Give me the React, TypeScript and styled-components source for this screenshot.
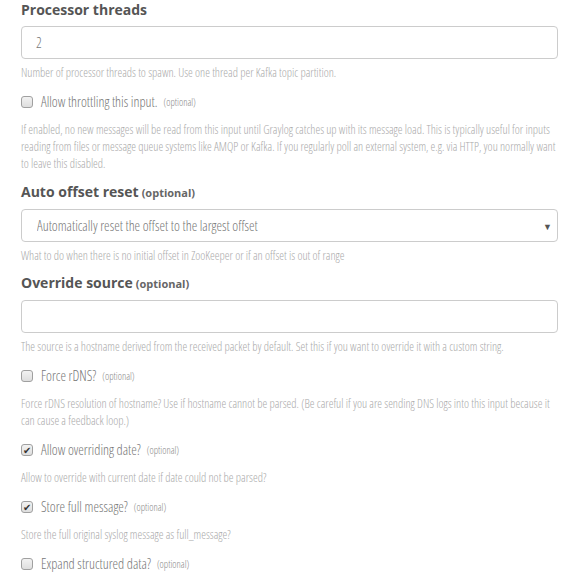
import React from 'react';
import styled, { createGlobalStyle } from 'styled-components';

const GlobalStyle = createGlobalStyle`
  html, body {
    margin: 0;
    padding: 0;
    background: #fff;
  }
  body {
    font-family: "Open Sans", "Liberation Sans", sans-serif;
    font-stretch: 75%;
    font-weight: 300;
    color: #777;
  }
`;

const Form = styled.form`
  padding: 0 20px 0 21px;
`;

const Group = styled.div<{ $tight?: boolean }>`
  margin-bottom: ${({ $tight }) => ($tight ? '9px' : '10px')};
`;

const Heading = styled.label`
  display: block;
  font-family: "Open Sans", sans-serif;
  font-stretch: 100%;
  font-weight: 700;
  font-size: 14px;
  line-height: 20px;
  color: #555;
  margin-bottom: 6px;

  small {
    font-size: 11px;
    font-weight: 700;
    color: #666;
    margin-left: 3px;
  }
`;

const TextBox = styled.input`
  display: block;
  box-sizing: border-box;
  width: 100%;
  height: 33px;
  padding: 6px 14px;
  border: 1px solid #ccc;
  border-radius: 4px;
  font-family: inherit;
  font-stretch: 75%;
  font-weight: 300;
  font-size: 14px;
  color: #777;
  background: #fff;
  outline: none;
`;

const SelectWrap = styled.div`
  position: relative;
`;

const Select = styled.select`
  display: block;
  box-sizing: border-box;
  width: 100%;
  height: 33px;
  padding: 6px 15px;
  border: 1px solid #ccc;
  border-radius: 4px;
  font-family: inherit;
  font-stretch: 75%;
  font-weight: 300;
  font-size: 14px;
  color: #777;
  background: #fff;
  appearance: none;
  outline: none;
`;

const Caret = styled.span`
  position: absolute;
  right: 6px;
  top: 11px;
  font-size: 9px;
  color: #555;
  pointer-events: none;
`;

const Help = styled.p<{ $afterCheck?: boolean }>`
  margin: ${({ $afterCheck }) => ($afterCheck ? '9px' : '5px')} 0 0;
  font-size: 12px;
  line-height: 17px;
  color: #aaa;
`;

const CheckRow = styled.label`
  display: flex;
  align-items: center;
  height: 21px;
  font-size: 14px;
  color: #777;

  small {
    font-size: 10px;
    margin-left: 6px;
    color: #888;
  }
`;

const Box = styled.span`
  box-sizing: border-box;
  width: 12px;
  height: 12px;
  margin-right: 8px;
  border: 1px solid #a0a0a0;
  border-radius: 3px;
  background: linear-gradient(#f2f2f2, #dedede);
  display: flex;
  align-items: center;
  justify-content: center;
  font-size: 10px;
  line-height: 1;
  color: #333;
  font-stretch: 100%;
`;

const Field: React.FC<{ title: string; optional?: boolean; tight?: boolean; help: string; children: React.ReactNode }> = ({
  title,
  optional,
  tight,
  help,
  children,
}) => (
  <Group $tight={tight}>
    <Heading>
      {title}
      {optional && <small>(optional)</small>}
    </Heading>
    {children}
    <Help>{help}</Help>
  </Group>
);

const Check: React.FC<{ label: string; checked?: boolean; help?: string }> = ({ label, checked, help }) => (
  <Group>
    <CheckRow>
      <Box>{checked ? '✔' : ''}</Box>
      {label}
      <small>(optional)</small>
    </CheckRow>
    {help && <Help $afterCheck>{help}</Help>}
  </Group>
);

export default function App() {
  return (
    <>
      <GlobalStyle />
      <Form>
        <Field title="Processor threads" help="Number of processor threads to spawn. Use one thread per Kafka topic partition.">
          <TextBox defaultValue="2" />
        </Field>
        <Check
          label="Allow throttling this input."
          help="If enabled, no new messages will be read from this input until Graylog catches up with its message load. This is typically useful for inputs reading from files or message queue systems like AMQP or Kafka. If you regularly poll an external system, e.g. via HTTP, you normally want to leave this disabled."
        />
        <Field title="Auto offset reset" optional tight help="What to do when there is no initial offset in ZooKeeper or if an offset is out of range">
          <SelectWrap>
            <Select defaultValue="largest">
              <option value="largest">Automatically reset the offset to the largest offset</option>
              <option value="smallest">Automatically reset the offset to the smallest offset</option>
            </Select>
            <Caret>▼</Caret>
          </SelectWrap>
        </Field>
        <Field title="Override source" optional help="The source is a hostname derived from the received packet by default. Set this if you want to override it with a custom string.">
          <TextBox />
        </Field>
        <Check
          label="Force rDNS?"
          help="Force rDNS resolution of hostname? Use if hostname cannot be parsed. (Be careful if you are sending DNS logs into this input because it can cause a feedback loop.)"
        />
        <Check label="Allow overriding date?" checked help="Allow to override with current date if date could not be parsed?" />
        <Check label="Store full message?" checked help="Store the full original syslog message as full_message?" />
        <Check label="Expand structured data?" />
      </Form>
    </>
  );
}
